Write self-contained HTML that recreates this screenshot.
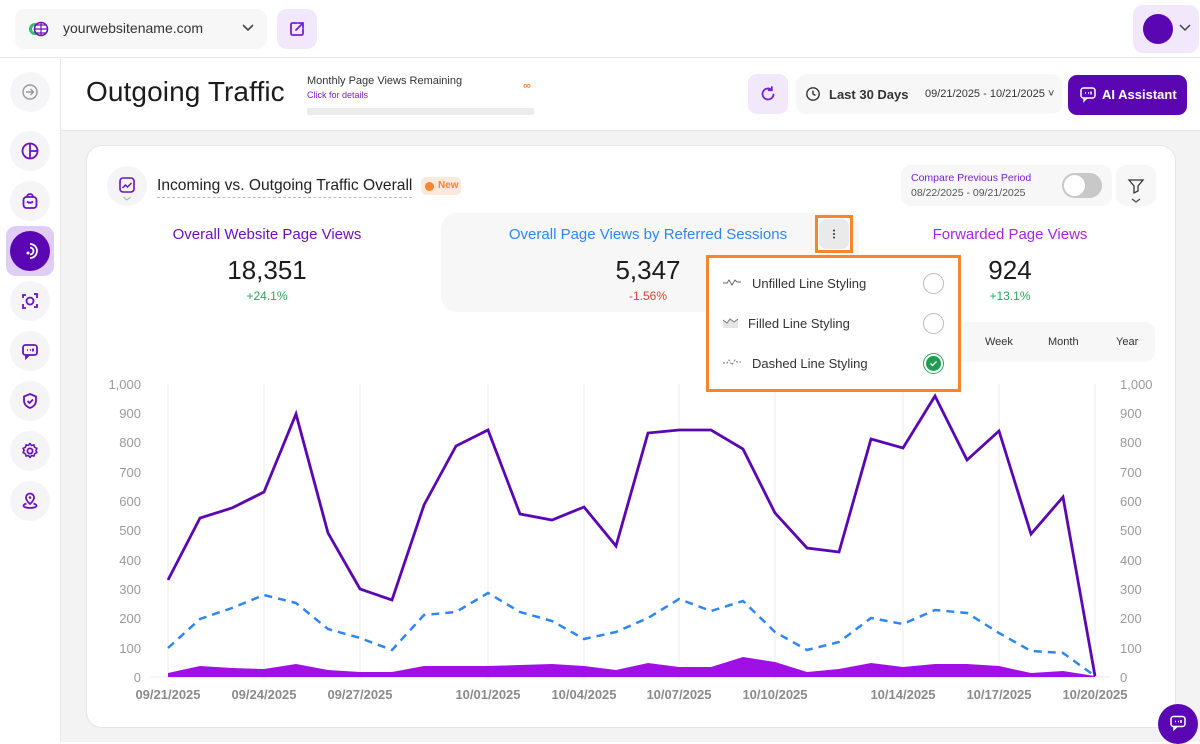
<!DOCTYPE html>
<html><head><meta charset="utf-8"><style>
*{box-sizing:border-box;margin:0;padding:0}
body{width:1200px;height:742px;overflow:hidden;background:#fff;font-family:"Liberation Sans",Arial,sans-serif;position:relative;color:#222}
.abs{position:absolute}
.sb{position:absolute;left:10px;width:40px;height:40px;border-radius:50%;background:#f5f4f6;display:flex;align-items:center;justify-content:center}
</style></head><body>
<div class="abs" style="left:0;top:0;width:1200px;height:58px;border-bottom:1px solid #e8e8e8;background:#fff"></div>
<div class="abs" style="left:15px;top:9px;width:252px;height:40px;border-radius:10px;background:#f7f7f7"></div>
<svg class="abs" style="left:27px;top:19px" width="22" height="20" viewBox="0 0 22 20"><circle cx="8" cy="10" r="6" fill="#2fbf6a"/><circle cx="8" cy="10" r="3" fill="#fff"/><circle cx="14" cy="10" r="6.5" fill="#fff" stroke="#6a12b8" stroke-width="1.6"/><path d="M7.5 10h13M14 3.5v13M9.5 6h9M9.5 14h9" stroke="#6a12b8" stroke-width="1.2" fill="none"/></svg>
<div class="abs" style="left:63px;top:20px;font-size:14px;color:#333">yourwebsitename.com</div>
<svg class="abs" style="left:241px;top:23px" width="14" height="10"><path d="M2 2l5 5 5-5" stroke="#444" stroke-width="1.6" fill="none"/></svg>
<div class="abs" style="left:277px;top:9px;width:40px;height:40px;border-radius:10px;background:#f1e8fc"></div>
<svg class="abs" style="left:288px;top:20px" width="18" height="18" viewBox="0 0 18 18"><path d="M9 3H4.5A1.5 1.5 0 0 0 3 4.5v9A1.5 1.5 0 0 0 4.5 15h9a1.5 1.5 0 0 0 1.5-1.5V9M8 10l7-7M10.5 3H15v4.5" stroke="#7a1fd0" stroke-width="1.8" fill="none" stroke-linecap="round"/></svg>
<div class="abs" style="left:1133px;top:5px;width:66px;height:48px;border-radius:10px;background:#f1e8fc"></div>
<div class="abs" style="left:1143px;top:14px;width:30px;height:30px;border-radius:50%;background:#5a07b3"></div>
<svg class="abs" style="left:1179px;top:24px" width="12" height="8"><path d="M1 1l5 5 5-5" stroke="#444" stroke-width="1.5" fill="none"/></svg>
<div class="abs" style="left:0;top:58px;width:61px;height:684px;border-right:1px solid #e8e8e8;background:#fff"></div>
<div class="sb" style="top:72px"><svg width="18" height="18" viewBox="0 0 18 18"><circle cx="9" cy="9" r="7" stroke="#999" stroke-width="1.4" fill="none"/><path d="M5 9h7M9.5 6l3 3-3 3" stroke="#999" stroke-width="1.4" fill="none"/></svg></div>
<div class="sb" style="top:131px"><svg width="20" height="20" viewBox="0 0 20 20"><circle cx="10" cy="10" r="7.5" stroke="#6a12c0" stroke-width="1.8" fill="none"/><path d="M10 2.5v15M10 10h7.5" stroke="#6a12c0" stroke-width="1.8"/></svg></div>
<div class="sb" style="top:181px"><svg width="20" height="20" viewBox="0 0 20 20"><rect x="3.5" y="6" width="13" height="11" rx="3" stroke="#6a12c0" stroke-width="1.8" fill="none"/><path d="M7 6a3 3 0 0 1 6 0M7 10.5q3 2.5 6 0" stroke="#6a12c0" stroke-width="1.8" fill="none"/></svg></div>
<div class="abs" style="left:6px;top:226px;width:48px;height:50px;border-radius:10px;background:#dfcdf5"></div>
<div class="sb" style="top:231px;background:#5a07b3"><svg width="20" height="20" viewBox="0 0 20 20"><path d="M10 3a7 7 0 0 1 0 14M10 6.5a3.5 3.5 0 0 1 0 7" stroke="#fff" stroke-width="1.8" fill="none"/><circle cx="8" cy="12" r="1.5" fill="#fff"/></svg></div>
<div class="sb" style="top:281px"><svg width="20" height="20" viewBox="0 0 20 20"><path d="M3 7V4h3M14 3h3v4M17 13v3h-3M6 17H3v-4" stroke="#6a12c0" stroke-width="1.8" fill="none"/><circle cx="10" cy="10" r="3.5" stroke="#6a12c0" stroke-width="1.8" fill="none"/></svg></div>
<div class="sb" style="top:331px"><svg width="20" height="20" viewBox="0 0 20 20"><rect x="3" y="4" width="14" height="10" rx="2.5" stroke="#6a12c0" stroke-width="1.8" fill="none"/><path d="M6 14v3l3-3" stroke="#6a12c0" stroke-width="1.8" fill="none"/><path d="M7 9h1M10 9h1M13 7.5v3" stroke="#6a12c0" stroke-width="1.8"/></svg></div>
<div class="sb" style="top:381px"><svg width="20" height="20" viewBox="0 0 20 20"><path d="M10 3l6 2.5v4c0 4-3 6.5-6 7.5-3-1-6-3.5-6-7.5v-4z" stroke="#6a12c0" stroke-width="1.8" fill="none"/><path d="M7.5 10l2 2 3.5-3.5" stroke="#6a12c0" stroke-width="1.8" fill="none"/></svg></div>
<div class="sb" style="top:431px"><svg width="20" height="20" viewBox="0 0 20 20"><circle cx="10" cy="10" r="2.6" stroke="#6a12c0" stroke-width="1.8" fill="none"/><path d="M10 2.5l1.6 2 2.4-.6.6 2.4 2.3 1-1 2.2 1 2.2-2.3 1-.6 2.4-2.4-.6-1.6 2-1.6-2-2.4.6-.6-2.4-2.3-1 1-2.2-1-2.2 2.3-1 .6-2.4 2.4.6z" stroke="#6a12c0" stroke-width="1.6" fill="none" stroke-linejoin="round"/></svg></div>
<div class="sb" style="top:481px"><svg width="20" height="20" viewBox="0 0 20 20"><path d="M10 13s-4-3.5-4-6.5a4 4 0 0 1 8 0c0 3-4 6.5-4 6.5z" stroke="#6a12c0" stroke-width="1.8" fill="none"/><circle cx="10" cy="6.5" r="1.3" fill="#6a12c0"/><path d="M6.5 12.5c-2 .6-3 1.5-3 2.3 0 1.3 3 2.2 6.5 2.2s6.5-.9 6.5-2.2c0-.8-1-1.7-3-2.3" stroke="#6a12c0" stroke-width="1.8" fill="none"/></svg></div>
<div class="abs" style="left:61px;top:130px;width:1139px;height:612px;background:#f3f3f3;border-top:1px solid #e6e6e6"></div>
<div class="abs" style="left:86px;top:76px;font-size:28px;color:#1c1c1c;letter-spacing:0.1px">Outgoing Traffic</div>
<div class="abs" style="left:307px;top:75px;font-size:11px;color:#333">Monthly Page Views Remaining</div>
<div class="abs" style="left:307px;top:90px;font-size:9px;color:#7a1fd0">Click for details</div>
<div class="abs" style="left:523px;top:80px;font-size:11px;color:#f5862e;font-weight:bold">∞</div>
<div class="abs" style="left:307px;top:108px;width:227px;height:7px;background:#ececec"></div>
<div class="abs" style="left:748px;top:74px;width:40px;height:40px;border-radius:9px;background:#f1e8fc"></div>
<svg class="abs" style="left:758px;top:84px" width="20" height="20" viewBox="0 0 20 20"><path d="M15.5 10.5a5.5 5.5 0 1 1-2-4.8" stroke="#7a1fd0" stroke-width="1.8" fill="none" stroke-linecap="round"/><path d="M13.8 3v3.2h-3.2" stroke="#7a1fd0" stroke-width="1.8" fill="none" stroke-linecap="round"/></svg>
<div class="abs" style="left:796px;top:74px;width:266px;height:40px;border-radius:10px;background:#f7f7f7"></div>
<svg class="abs" style="left:805px;top:86px" width="16" height="16" viewBox="0 0 16 16"><circle cx="8" cy="8" r="6.2" stroke="#333" stroke-width="1.4" fill="none"/><path d="M8 4.5V8l2.5 1.5" stroke="#333" stroke-width="1.4" fill="none"/></svg>
<div class="abs" style="left:829px;top:87px;font-size:13px;font-weight:bold;color:#333">Last 30 Days</div>
<div class="abs" style="left:925px;top:88px;font-size:11px;color:#333">09/21/2025 - 10/21/2025 ˅</div>
<div class="abs" style="left:1068px;top:75px;width:119px;height:40px;border-radius:9px;background:#5a07b3"></div>
<svg class="abs" style="left:1079px;top:86px" width="18" height="17" viewBox="0 0 18 17"><rect x="2" y="2" width="14" height="10" rx="2.5" stroke="#fff" stroke-width="1.5" fill="none"/><path d="M5 12v3l3-3" stroke="#fff" stroke-width="1.5" fill="none"/><path d="M6 7h1M9 7h1M12 5.5v3" stroke="#fff" stroke-width="1.5"/></svg>
<div class="abs" style="left:1102px;top:87px;font-size:13px;font-weight:bold;color:#fff">AI Assistant</div>
<div class="abs" style="left:86px;top:145px;width:1090px;height:583px;border-radius:16px;background:#fff;border:1px solid #e6e6e6"></div>
<div class="abs" style="left:107px;top:166px;width:40px;height:40px;border-radius:50%;background:#f5f4f6"></div>
<svg class="abs" style="left:118px;top:177px" width="18" height="26" viewBox="0 0 18 26"><rect x="2" y="1" width="14" height="14" rx="3" stroke="#6a12c0" stroke-width="1.6" fill="none"/><path d="M4.5 11l3-3 2 2 4-4" stroke="#6a12c0" stroke-width="1.5" fill="none"/><path d="M5.5 20l3.5 3 3.5-3" stroke="#aaa" stroke-width="1" fill="none"/></svg>
<div class="abs" style="left:157px;top:177px;font-size:15.6px;color:#222;border-bottom:1px dashed #bbb;padding-bottom:2px">Incoming vs. Outgoing Traffic Overall</div>
<div class="abs" style="left:421px;top:177px;width:40px;height:18px;border-radius:5px;background:#fde8dc"></div>
<div class="abs" style="left:425px;top:182px;width:9px;height:9px;border-radius:50%;background:#f5862e"></div>
<div class="abs" style="left:438px;top:180px;font-size:10px;font-weight:bold;color:#f5862e">New</div>
<div class="abs" style="left:901px;top:165px;width:211px;height:41px;border-radius:10px;background:#f7f7f7"></div>
<div class="abs" style="left:911px;top:172px;font-size:10.5px;color:#7a1fd0">Compare Previous Period</div>
<div class="abs" style="left:911px;top:187px;font-size:10.5px;color:#555">08/22/2025 - 09/21/2025</div>
<div class="abs" style="left:1062px;top:173px;width:40px;height:25px;border-radius:13px;background:#c8c8c8"></div>
<div class="abs" style="left:1064px;top:175px;width:21px;height:21px;border-radius:50%;background:#fff"></div>
<div class="abs" style="left:1116px;top:165px;width:40px;height:41px;border-radius:10px;background:#f7f7f7"></div>
<svg class="abs" style="left:1126px;top:177px" width="20" height="26" viewBox="0 0 20 26"><path d="M3 3h14l-5 6v5l-4 2V9z" stroke="#333" stroke-width="1.3" fill="none"/><path d="M6 22l4 3 4-3" stroke="#444" stroke-width="1.2" fill="none"/></svg>
<div class="abs" style="left:102px;top:226px;width:330px;text-align:center;font-size:15px;color:#6a12c0">Overall Website Page Views</div>
<div class="abs" style="left:102px;top:255px;width:330px;text-align:center;font-size:26px;color:#1c1c1c">18,351</div>
<div class="abs" style="left:102px;top:289px;width:330px;text-align:center;font-size:12px;color:#27a85a">+24.1%</div>
<div class="abs" style="left:441px;top:213px;width:418px;height:99px;border-radius:16px;background:#f7f7f7"></div>
<div class="abs" style="left:480px;top:226px;width:336px;text-align:center;font-size:15px;color:#2f86f0">Overall Page Views by Referred Sessions</div>
<div class="abs" style="left:480px;top:255px;width:336px;text-align:center;font-size:26px;color:#1c1c1c">5,347</div>
<div class="abs" style="left:480px;top:289px;width:336px;text-align:center;font-size:12px;color:#e0403a">-1.56%</div>
<div class="abs" style="left:815px;top:215px;width:38px;height:38px;border:3px solid #f5862e;background:#fff"></div>
<div class="abs" style="left:819px;top:219px;width:30px;height:30px;border-radius:7px;background:#eaeaea"></div>
<svg class="abs" style="left:832px;top:229px" width="4" height="10"><circle cx="2" cy="1.5" r="1" fill="#333"/><circle cx="2" cy="5" r="1" fill="#333"/><circle cx="2" cy="8.5" r="1" fill="#333"/></svg>
<div class="abs" style="left:880px;top:226px;width:260px;text-align:center;font-size:15px;color:#a425e6">Forwarded Page Views</div>
<div class="abs" style="left:880px;top:255px;width:260px;text-align:center;font-size:26px;color:#1c1c1c">924</div>
<div class="abs" style="left:880px;top:289px;width:260px;text-align:center;font-size:12px;color:#27a85a">+13.1%</div>
<div class="abs" style="left:900px;top:322px;width:255px;height:40px;border-radius:10px;background:#f7f7f7"></div>
<div class="abs" style="left:985px;top:336px;font-size:11px;color:#333">Week</div>
<div class="abs" style="left:1048px;top:336px;font-size:11px;color:#333">Month</div>
<div class="abs" style="left:1116px;top:336px;font-size:11px;color:#333">Year</div>
<svg class="abs" style="left:0;top:0" width="1200" height="742">
<g stroke="#ececec" stroke-width="1">
<line x1="168" y1="384" x2="168" y2="680"/><line x1="264" y1="384" x2="264" y2="680"/><line x1="360" y1="384" x2="360" y2="680"/><line x1="488" y1="384" x2="488" y2="680"/><line x1="584" y1="384" x2="584" y2="680"/><line x1="679" y1="384" x2="679" y2="680"/><line x1="775" y1="384" x2="775" y2="680"/><line x1="903" y1="384" x2="903" y2="680"/><line x1="999" y1="384" x2="999" y2="680"/><line x1="1095" y1="384" x2="1095" y2="680"/>
<line x1="150" y1="677" x2="1110" y2="677"/>
</g>
<polygon fill="#a010e6" points="168,677 168,673 200,666 232,668 264,669 296,664 328,670 360,672 392,672 424,666 456,666 488,666 520,665 552,664 584,666 616,670 648,663 679,667 711,667 743,657 775,662 807,672 839,669 871,663 903,667 935,664 967,664 999,666 1031,673 1063,671 1095,676 1095,677"/>
<polyline fill="none" stroke="#2f86f0" stroke-width="2.5" stroke-dasharray="8,6" points="168,648 200,619 232,608 264,595 296,603 328,629 360,638 392,650 424,615 456,612 488,593 520,612 552,621 584,639 616,632 648,618 679,599 711,611 743,601 775,632 807,650 839,642 871,618 903,624 935,610 967,613 999,633 1031,651 1063,653 1095,676"/>
<polyline fill="none" stroke="#5a07b3" stroke-width="2.8" points="168,580 200,518 232,508 264,492 296,414 328,533 360,589 392,600 424,505 456,446 488,430 520,514 552,520 584,507 616,546 648,433 679,430 711,430 743,449 775,513 807,548 839,552 871,439 903,448 935,396 967,460 999,431 1031,534 1063,497 1095,676"/>
<g font-family="Liberation Sans,Arial,sans-serif" font-size="13" fill="#9a9a9a" text-anchor="end">
<text x="141" y="389">1,000</text><text x="141" y="418">900</text><text x="141" y="447">800</text><text x="141" y="477">700</text><text x="141" y="506">600</text><text x="141" y="535">500</text><text x="141" y="565">400</text><text x="141" y="594">300</text><text x="141" y="623">200</text><text x="141" y="653">100</text><text x="141" y="682">0</text>
</g>
<g font-family="Liberation Sans,Arial,sans-serif" font-size="13" fill="#9a9a9a">
<text x="1120" y="389">1,000</text><text x="1120" y="418">900</text><text x="1120" y="447">800</text><text x="1120" y="477">700</text><text x="1120" y="506">600</text><text x="1120" y="535">500</text><text x="1120" y="565">400</text><text x="1120" y="594">300</text><text x="1120" y="623">200</text><text x="1120" y="653">100</text><text x="1120" y="682">0</text>
</g>
<g font-family="Liberation Sans,Arial,sans-serif" font-size="13" font-weight="bold" fill="#8a8a8a" text-anchor="middle">
<text x="168" y="699">09/21/2025</text><text x="264" y="699">09/24/2025</text><text x="360" y="699">09/27/2025</text><text x="488" y="699">10/01/2025</text><text x="584" y="699">10/04/2025</text><text x="679" y="699">10/07/2025</text><text x="775" y="699">10/10/2025</text><text x="903" y="699">10/14/2025</text><text x="999" y="699">10/17/2025</text><text x="1095" y="699">10/20/2025</text>
</g>
</svg>
<div class="abs" style="left:706px;top:255px;width:255px;height:137px;border:3px solid #f5862e;background:#fff"></div>
<svg class="abs" style="left:722px;top:277px" width="20" height="10"><path d="M1 6h4l2-3 3 5 3-5 2 2h4" stroke="#666" stroke-width="1" fill="none"/></svg>
<div class="abs" style="left:752px;top:276px;font-size:13px;color:#333">Unfilled Line Styling</div>
<div class="abs" style="left:923px;top:273px;width:21px;height:21px;border-radius:50%;border:1.5px solid #bbb"></div>
<svg class="abs" style="left:722px;top:316px" width="18" height="12"><path d="M1 4l4 3 3-4 4 3 4-3v9H1z" fill="#e5e5e5"/><path d="M1 4l4 3 3-4 4 3 4-3" stroke="#777" stroke-width="1" fill="none"/></svg>
<div class="abs" style="left:748px;top:316px;font-size:13px;color:#333">Filled Line Styling</div>
<div class="abs" style="left:923px;top:313px;width:21px;height:21px;border-radius:50%;border:1.5px solid #bbb"></div>
<svg class="abs" style="left:722px;top:357px" width="20" height="10"><path d="M1 6h4l2-3 3 5 3-5 2 2h4" stroke="#777" stroke-width="1" stroke-dasharray="2,1.5" fill="none"/></svg>
<div class="abs" style="left:752px;top:356px;font-size:13px;color:#333">Dashed Line Styling</div>
<div class="abs" style="left:923px;top:353px;width:21px;height:21px;border-radius:50%;border:1.5px solid #27a85a;background:#fff"></div>
<div class="abs" style="left:926px;top:356px;width:15px;height:15px;border-radius:50%;background:#1f9d55"></div>
<svg class="abs" style="left:929px;top:359px" width="9" height="9"><path d="M1.5 4.5l2 2 4-4" stroke="#fff" stroke-width="1.4" fill="none"/></svg>
<div class="abs" style="left:1158px;top:704px;width:40px;height:40px;border-radius:50%;background:#5a07b3"></div>
<svg class="abs" style="left:1169px;top:714px" width="18" height="18" viewBox="0 0 18 17"><rect x="2" y="2" width="14" height="10" rx="2.5" stroke="#fff" stroke-width="1.5" fill="none"/><path d="M5 12v3l3-3" stroke="#fff" stroke-width="1.5" fill="none"/><path d="M6 7h1M9 7h1M12 5.5v3" stroke="#fff" stroke-width="1.5"/></svg>
</body></html>
